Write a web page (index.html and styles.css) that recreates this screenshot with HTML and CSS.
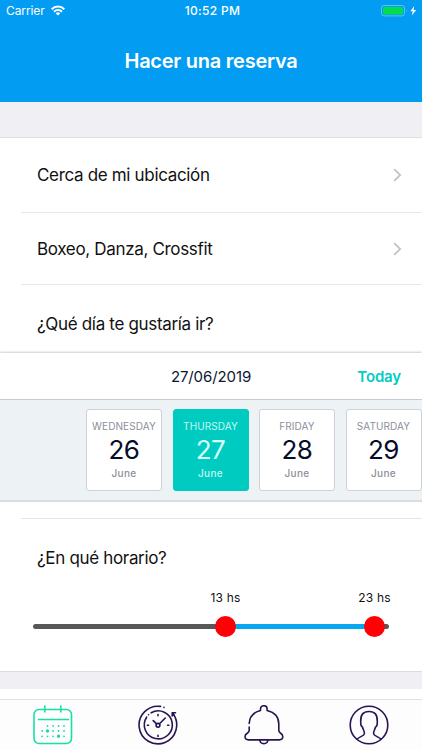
FILE: index.html
```html
<!DOCTYPE html>
<html lang="es">

<head>
  <meta charset="UTF-8" />
  <meta name="viewport" content="width=device-width, initial-scale=1.0" />
  <title>Hacer una reserva</title>
  <link rel="stylesheet" href="styles.css">
</head>

<body>
  <header class="header">
    <div class="status-bar">
      <div class="carrier">
        <span>Carrier</span>
        <svg width="14" height="11" viewBox="0 0 14 11" fill="none" stroke="#fff" stroke-width="2">
          <path d="M.7 4.200a8.900 8.900 0 0 1 12.600 0" />
          <path d="M3 6.700a5.600 5.600 0 0 1 8 0" />
          <path d="M7 10.600 4.800 8.400a3.100 3.100 0 0 1 4.400 0z" fill="#fff" stroke="none" />
        </svg>
      </div>
      <span class="clock">10:52 PM</span>
      <svg class="battery" width="36" height="12" viewBox="0 0 36 12">
        <rect x=".5" y=".5" width="23" height="10.4" rx="2.4" fill="none" stroke="#5bc3f3" />
        <rect x="2" y="2" width="20" height="7.4" rx="1.2" fill="#04dc50" />
        <path d="M25 3.8q1.600 1.800 0 3.800z" fill="#5bc3f3" />
        <path d="M33.2 1 29.400 6.200h2.400l-1 4.200 4.400-5.400h-2.600z" fill="#fff" />
      </svg>
    </div>
    <h1 class="title">Hacer una reserva</h1>
  </header>

  <main class="form">
    <a class="row">
      <span class="label">Cerca de mi ubicación</span>
      <svg class="chevron" width="9" height="14" viewBox="0 0 9 14"><path d="M1.2 1.2 7.2 7l-6 5.8" /></svg>
    </a>
    <a class="row row-sports">
      <span class="label">Boxeo, Danza, Crossfit</span>
      <svg class="chevron" width="9" height="14" viewBox="0 0 9 14"><path d="M1.2 1.2 7.2 7l-6 5.8" /></svg>
    </a>
    <div class="row row-day">
      <span class="label">¿Qué día te gustaría ir?</span>
    </div>

    <section class="calendar">
      <div class="calendar-header">
        <span class="date">27/06/2019</span>
        <span class="today">Today</span>
      </div>
      <div class="days">
        <div class="day">
          <span class="weekday">WEDNESDAY</span>
          <span class="number">26</span>
          <span class="month">June</span>
        </div>
        <div class="day selected">
          <span class="weekday">THURSDAY</span>
          <span class="number">27</span>
          <span class="month">June</span>
        </div>
        <div class="day">
          <span class="weekday">FRIDAY</span>
          <span class="number">28</span>
          <span class="month">June</span>
        </div>
        <div class="day">
          <span class="weekday">SATURDAY</span>
          <span class="number">29</span>
          <span class="month">June</span>
        </div>
      </div>
    </section>

    <section class="schedule">
      <span class="label">¿En qué horario?</span>
      <div class="slider">
        <div class="range"></div>
        <div class="thumb from"><span>13 hs</span></div>
        <div class="thumb to"><span>23 hs</span></div>
      </div>
    </section>
  </main>

  <nav class="tabs">
    <svg class="tab active" width="40" height="40" viewBox="0 0 40 40">
      <rect x="1" y="4.5" width="37.5" height="34" rx="5" />
      <path d="M11.8 1v6M27.8 1v6M5.5 14.5h30" />
      <path class="dots" d="M14.5 21h0M20 21h0M25.5 21h0M31 21h0M9.2 26h0M20 26h0M25.5 26h0M31 26h0M9.2 31.3h0M14.5 31.3h0M20 31.3h0M31 31.3h0" />
      <path class="dots big" d="M14.5 26h0M25.5 31.3h0" />
    </svg>
    <svg class="tab" width="40" height="40" viewBox="0 0 40 40">
      <path d="M22.500 1.400A18.800 18.800 0 1 0 34.800 8.600M26 2.400h0" />
      <path d="M34.200 11V7.800h3.300M34.400 8l1.600 2" />
      <path d="M13.200 7.800A14 14 0 1 1 8.600 12.200M10.600 9.800h0" />
      <circle cx="20" cy="20.3" r="1.9" />
      <path d="M18.600 18.800 15.200 15.600M21.500 18.800l5.800-5.800M20 9.500v1.200M20 30.200v1.200M9.400 20.300h1.200M29.600 20.300h1.200" />
    </svg>
    <svg class="tab" width="40" height="40" viewBox="0 0 40 40">
      <path d="M5.2 18.5C5.500 11 9.500 7.300 16.500 5.500V4a3.300 3.300 0 0 1 6.600 0v1.500C30.500 7.300 34.800 12 34.800 19v6.600c0 3 4 2.400 4 6 0 2.200-1.300 3.300-3.500 3.300H4.500C2.300 34.900 1 33.800 1 31.600c0-3.600 4.200-3 4.200-6v-3.600M15.800 35c.5 4.800 7.600 4.800 8.100 0" />
    </svg>
    <svg class="tab" width="40" height="40" viewBox="0 0 40 40">
      <circle cx="20" cy="20" r="18.8" />
      <path d="M8 34.200c2.500-2.500 7.200-3.300 7.400-5.500.2-2.400-1.200-3.700-1.900-6.700-2-.3-1.700-2-1.800-5.500C11.500 9.500 14.200 6.500 20 6.500s8.500 3 8.300 10c-.1 3.500.2 5.200-1.800 5.500-.7 3-2.100 4.300-1.900 6.700.2 2.200 4.900 3 7.400 5.500" />
    </svg>
  </nav>
</body>

</html>
```

FILE: styles.css
```css
* {
  padding: 0;
  margin: 0;
  box-sizing: border-box;
}

body {
  display: flex;
  flex-direction: column;
  height: 750px;
  overflow: hidden;
  background: #efeff4;
  font-family: Inter, "Liberation Sans", sans-serif;
  color: #111;
}

.header {
  height: 102px;
  flex-shrink: 0;
  background: #029cf3;
  color: #fff;
}

.status-bar {
  display: grid;
  grid-template-columns: 1fr auto 1fr;
  align-items: center;
  height: 21px;
  padding: 0 5px 0 6px;
  font-size: 12px;
}

.carrier {
  display: flex;
  align-items: center;
  gap: 6px;
  letter-spacing: -0.1px;
}

.clock {
  padding-left: 2px;
  font-weight: 500;
  letter-spacing: 0.3px;
}

.battery {
  justify-self: end;
}

.title {
  margin-top: 28px;
  font-size: 20px;
  font-weight: 600;
  line-height: 24px;
  letter-spacing: -0.25px;
  text-align: center;
}

.form {
  height: 535px;
  flex-shrink: 0;
  margin-top: 35px;
  border-top: 1px solid #dddde2;
  border-bottom: 1px solid #dcdce0;
  background: #fff;
}

.row {
  display: flex;
  align-items: center;
  justify-content: space-between;
  height: 75px;
  margin-left: 21px;
  padding: 0 20px 0 16px;
  border-bottom: 1px solid #e8e8ea;
}

.row-sports {
  height: 72px;
}

.row-day {
  height: 68px;
  padding-top: 10px;
  border-bottom: 0;
}

.label {
  font-size: 17px;
  line-height: 22px;
  letter-spacing: -0.33px;
}

.chevron {
  fill: none;
  stroke: #c4c4c8;
  stroke-width: 1.8;
}

.calendar {
  position: relative;
  box-shadow: 0 -1px 2px rgba(0, 0, 0, 0.2);
}

.calendar-header {
  display: grid;
  grid-template-columns: 1fr auto 1fr;
  align-items: center;
  height: 47px;
  padding: 0 21px;
  border-bottom: 1px solid #c8c9d3;
  background: #fff;
  color: #0c1833;
  font-size: 15px;
}

.date {
  grid-column: 2;
  letter-spacing: -0.1px;
}

.today {
  justify-self: end;
  color: #04cbc2;
  font-weight: 600;
  letter-spacing: -0.15px;
}

.days {
  display: flex;
  gap: 10.5px;
  height: 102px;
  padding: 9px 0 0 86px;
  overflow: hidden;
  border-bottom: 2px solid #d9dedf;
  background: #edf2f4;
}

.day {
  display: flex;
  flex-direction: column;
  align-items: center;
  flex-shrink: 0;
  width: 76px;
  height: 82px;
  padding-top: 8px;
  border: 1px solid #ced1da;
  border-radius: 3px;
  background: #fff;
  color: #8b8f9b;
}

.weekday {
  font-size: 10px;
  line-height: 16px;
  letter-spacing: 0.1px;
}

.number {
  color: #050d2b;
  font-size: 26px;
  line-height: 31px;
  letter-spacing: -0.5px;
}

.month {
  font-size: 10px;
  font-weight: 500;
  line-height: 16px;
  letter-spacing: 0.3px;
}

.selected {
  border-color: #00cbc1;
  background: #00cbc1;
  color: #c3f8f3;
}

.selected .number {
  color: #d5fffb;
}

.schedule {
  height: 168px;
  margin: 16px 0 0 21px;
  padding: 28px 0 0 16px;
  border-top: 1px solid #e5e5e7;
}

.schedule .label {
  display: block;
}

.slider {
  position: relative;
  width: 356px;
  height: 5px;
  margin: 55px 0 0 -4px;
  border-radius: 3px;
  background: #58585a;
}

.range {
  width: 149px;
  height: 5px;
  margin-left: 193px;
  background: #08a8f0;
}

/* thumbs sit on top of the track */
.thumb {
  position: absolute;
  top: -8px;
  width: 21px;
  height: 21px;
  border-radius: 50%;
  background: #ff0006;
}

.from {
  left: 182px;
}

.to {
  left: 331px;
}

.thumb span {
  position: absolute;
  left: 50%;
  bottom: 31px;
  transform: translateX(-50%);
  font-size: 12px;
  line-height: 16px;
  letter-spacing: 0.15px;
  white-space: nowrap;
}

.tabs {
  display: flex;
  justify-content: space-between;
  flex: 1;
  margin-top: 17px;
  padding: 16px 33px 0;
  background: linear-gradient(#fff 10px, #e0e0e2 10px, #e0e0e2 11px, #fdfdfd 11px);
}

.tab {
  fill: none;
  stroke: #281452;
  stroke-width: 1.6;
  stroke-linecap: round;
  stroke-linejoin: round;
}

.active {
  stroke: #19dfa7;
}

.dots {
  stroke-width: 1.8;
}

.big {
  stroke-width: 3.4;
}
```
